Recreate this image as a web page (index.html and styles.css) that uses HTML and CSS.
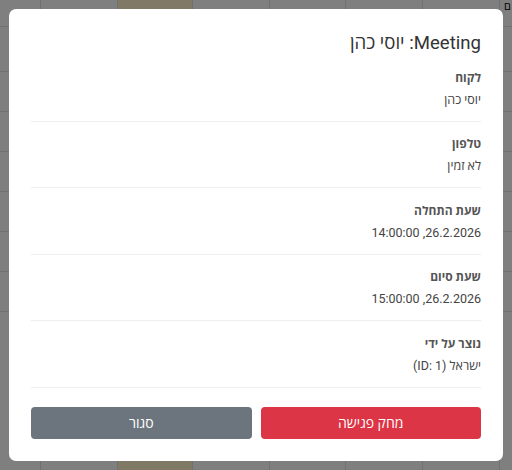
FILE: index.html
```html
<!DOCTYPE html>
<html lang="he" dir="rtl">
<head>
<meta charset="utf-8">
<title>Meeting</title>
<link rel="stylesheet" href="styles.css">
</head>
<body>
<div class="calendar" dir="ltr">
  <div class="cal-row head">
    <div class="cell c0"></div><div class="cell c1"></div><div class="cell c2 today"></div><div class="cell c3"></div><div class="cell c4"></div><div class="cell c5"></div><div class="cell c6"></div><div class="cell c7"><span class="corner">ם</span></div>
  </div>
  <div class="cal-row r45"><div class="cell c0"></div><div class="cell c1"></div><div class="cell c2 today"></div><div class="cell c3"></div><div class="cell c4"></div><div class="cell c5"></div><div class="cell c6"></div><div class="cell c7"></div></div>
  <div class="cal-row"><div class="cell c0"></div><div class="cell c1"></div><div class="cell c2 today"></div><div class="cell c3"></div><div class="cell c4"></div><div class="cell c5"></div><div class="cell c6"></div><div class="cell c7"></div></div>
  <div class="cal-row"><div class="cell c0"></div><div class="cell c1"></div><div class="cell c2 today"></div><div class="cell c3"></div><div class="cell c4"></div><div class="cell c5"></div><div class="cell c6"></div><div class="cell c7"></div></div>
  <div class="cal-row"><div class="cell c0"></div><div class="cell c1"></div><div class="cell c2 today"></div><div class="cell c3"></div><div class="cell c4"></div><div class="cell c5"></div><div class="cell c6"></div><div class="cell c7"></div></div>
  <div class="cal-row"><div class="cell c0"></div><div class="cell c1"></div><div class="cell c2 today"></div><div class="cell c3"></div><div class="cell c4"></div><div class="cell c5"></div><div class="cell c6"></div><div class="cell c7"></div></div>
  <div class="cal-row"><div class="cell c0"></div><div class="cell c1"></div><div class="cell c2 today"></div><div class="cell c3"></div><div class="cell c4"></div><div class="cell c5"></div><div class="cell c6"></div><div class="cell c7"></div></div>
  <div class="cal-row"><div class="cell c0"></div><div class="cell c1"></div><div class="cell c2 today"></div><div class="cell c3"></div><div class="cell c4"></div><div class="cell c5"></div><div class="cell c6"></div><div class="cell c7"></div></div>
  <div class="cal-row tall"><div class="cell c0"></div><div class="cell c1"></div><div class="cell c2 today"></div><div class="cell c3"></div><div class="cell c4"></div><div class="cell c5"></div><div class="cell c6"></div><div class="cell c7"></div></div>
</div>
<div class="backdrop"></div>
<div class="modal">
  <h5 class="modal-title">Meeting: יוסי כהן</h5>
  <div class="detail">
    <div class="label">לקוח</div>
    <div class="value">יוסי כהן</div>
  </div>
  <div class="detail">
    <div class="label">טלפון</div>
    <div class="value">לא זמין</div>
  </div>
  <div class="detail">
    <div class="label">שעת התחלה</div>
    <div class="value">26.2.2026, 14:00:00</div>
  </div>
  <div class="detail">
    <div class="label">שעת סיום</div>
    <div class="value">26.2.2026, 15:00:00</div>
  </div>
  <div class="detail">
    <div class="label">נוצר על ידי</div>
    <div class="value">ישראל (ID: 1)</div>
  </div>
  <div class="actions">
    <button class="btn btn-danger">מחק פגישה</button>
    <button class="btn btn-secondary">סגור</button>
  </div>
</div>
</body>
</html>
```
FILE: styles.css
```css
html, body {
  margin: 0;
  padding: 0;
  width: 512px;
  height: 470px;
  overflow: hidden;
  font-family: Roboto, "Open Sans", "Liberation Sans", sans-serif;
  background: #fff;
}

.calendar {
  display: flex;
  flex-direction: column;
  width: 512px;
  height: 470px;
}

.cal-row {
  display: flex;
  height: 40px;
  border-bottom: 1px solid #dee2e6;
  box-sizing: border-box;
}
.cal-row.head { height: 27px; }
.cal-row.r45 { height: 45px; }
.cal-row.tall { flex: 1; border-bottom: none; }

.cell {
  box-sizing: border-box;
  border-right: 1px solid #dee2e6;
  background: #fff;
  position: relative;
}
.c0 { width: 41px; }
.c1 { width: 77px; }
.c2 { width: 75px; }
.c3 { width: 77px; }
.c4 { width: 76px; }
.c5 { width: 77px; }
.c6 { width: 77px; }
.c7 { flex: 1; border-right: none; overflow: hidden; }
.today { background: #fff3cd; }

.corner {
  position: absolute;
  left: 4px;
  top: 1px;
  font-size: 11px;
  line-height: 11px;
  color: #000;
}

.backdrop {
  position: fixed;
  inset: 0;
  background: rgba(0, 0, 0, 0.5);
}

.modal {
  position: fixed;
  left: 9px;
  top: 9px;
  width: 494px;
  height: 452px;
  box-sizing: border-box;
  padding: 22px 22px 22px;
  background: #fff;
  border-radius: 7px;
  display: flex;
  flex-direction: column;
}

.modal-title {
  margin: 0;
  font-size: 18.6px;
  line-height: 24px;
  font-weight: 400;
  color: #333;
}

.detail {
  padding: 11.5px 0 10px;
  border-bottom: 1px solid #eee;
}

.label {
  font-size: 12px;
  line-height: 22px;
  font-weight: 700;
  color: #555;
}

.value {
  font-size: 12.5px;
  line-height: 22px;
  color: #444;
}

.actions {
  display: flex;
  gap: 9px;
  margin-top: 19px;
}

.btn {
  flex: 1;
  height: 32px;
  border: none;
  border-radius: 4px;
  color: #fff;
  font-family: inherit;
  font-size: 14px;
  cursor: pointer;
}
.btn-danger { background: #dc3545; }
.btn-secondary { background: #6c757d; }
```
